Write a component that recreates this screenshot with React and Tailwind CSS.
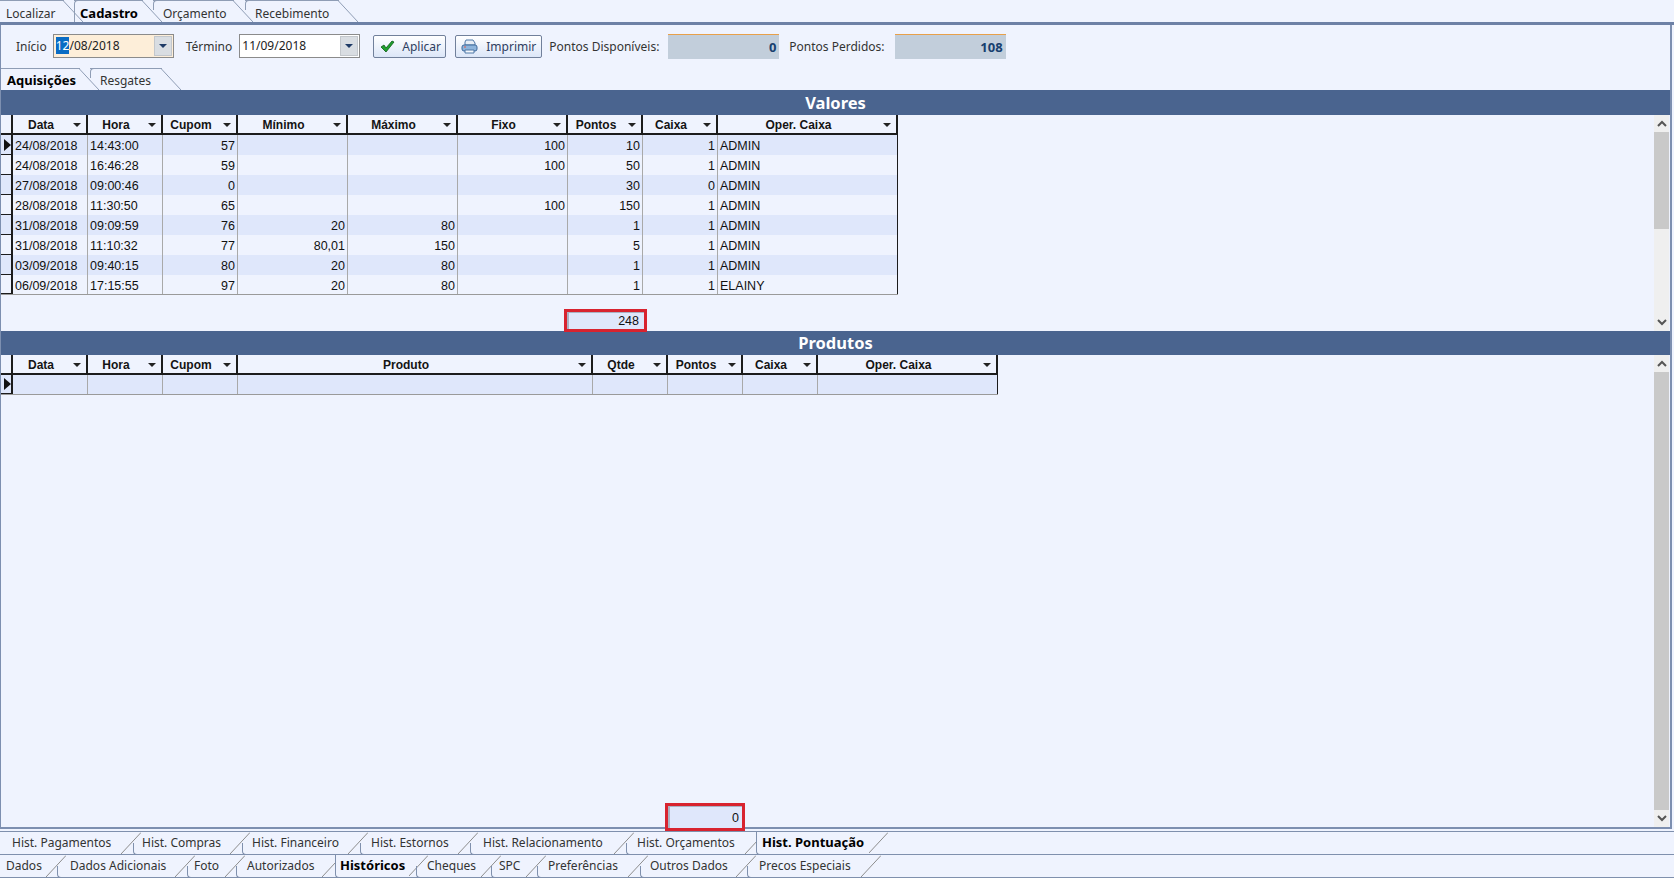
const UI_FONT = "font-['Noto_Sans',sans-serif]"
const GRID_FONT = "font-['Liberation_Sans',Arial,sans-serif]"

const VALORES_COLS = [
  { label: 'Data', cls: 'w-[75px]' },
  { label: 'Hora', cls: 'w-[75px]' },
  { label: 'Cupom', cls: 'w-[75px]', right: true },
  { label: 'Mínimo', cls: 'w-[110px]', right: true },
  { label: 'Máximo', cls: 'w-[110px]', right: true },
  { label: 'Fixo', cls: 'w-[110px]', right: true },
  { label: 'Pontos', cls: 'w-[75px]', right: true },
  { label: 'Caixa', cls: 'w-[75px]', right: true },
  { label: 'Oper. Caixa', cls: 'w-[180px]' },
]

const VALORES_ROWS = [
  ['24/08/2018', '14:43:00', '57', '', '', '100', '10', '1', 'ADMIN'],
  ['24/08/2018', '16:46:28', '59', '', '', '100', '50', '1', 'ADMIN'],
  ['27/08/2018', '09:00:46', '0', '', '', '', '30', '0', 'ADMIN'],
  ['28/08/2018', '11:30:50', '65', '', '', '100', '150', '1', 'ADMIN'],
  ['31/08/2018', '09:09:59', '76', '20', '80', '', '1', '1', 'ADMIN'],
  ['31/08/2018', '11:10:32', '77', '80,01', '150', '', '5', '1', 'ADMIN'],
  ['03/09/2018', '09:40:15', '80', '20', '80', '', '1', '1', 'ADMIN'],
  ['06/09/2018', '17:15:55', '97', '20', '80', '', '1', '1', 'ELAINY'],
]

const PRODUTOS_COLS = [
  { label: 'Data', cls: 'w-[75px]' },
  { label: 'Hora', cls: 'w-[75px]' },
  { label: 'Cupom', cls: 'w-[75px]' },
  { label: 'Produto', cls: 'w-[355px]' },
  { label: 'Qtde', cls: 'w-[75px]' },
  { label: 'Pontos', cls: 'w-[75px]' },
  { label: 'Caixa', cls: 'w-[75px]' },
  { label: 'Oper. Caixa', cls: 'w-[180px]' },
]

const TOP_TABS = [
  { label: 'Localizar', cls: 'w-[64px] pl-[6px]', first: true },
  { label: 'Cadastro', cls: 'w-[69px] pl-[6px] -ml-[9px]', active: true },
  { label: 'Orçamento', cls: 'w-[81px] pl-[10px] -ml-[9px]' },
  { label: 'Recebimento', cls: 'w-[94px] pl-[10px] -ml-[8px]' },
]

const INNER_TABS = [
  { label: 'Aquisições', cls: 'w-[79px] pl-[6px]', active: true, first: true },
  { label: 'Resgates', cls: 'w-[72px] pl-[10px] -ml-[9px]' },
]

const HIST_TABS = [
  { label: 'Hist. Pagamentos', cls: 'w-[122px] pl-[12px]', first: true },
  { label: 'Hist. Compras', cls: 'w-[98px] pl-[9px] -ml-[8px]' },
  { label: 'Hist. Financeiro', cls: 'w-[107px] pl-[10px] -ml-[8px]' },
  { label: 'Hist. Estornos', cls: 'w-[99px] pl-[11px] -ml-[8px]' },
  { label: 'Hist. Relacionamento', cls: 'w-[145px] pl-[13px] -ml-[8px]' },
  { label: 'Hist. Orçamentos', cls: 'w-[120px] pl-[11px] -ml-[8px]' },
  { label: 'Hist. Pontuação', cls: 'w-[113px] pl-[6px] -ml-[9px]', active: true },
]

const MAIN_TABS = [
  { label: 'Dados', cls: 'w-[47px] pl-[6px]', first: true },
  { label: 'Dados Adicionais', cls: 'w-[119px] pl-[13px] -ml-[9px]' },
  { label: 'Foto', cls: 'w-[39px] pl-[7px] -ml-[8px]' },
  { label: 'Autorizados', cls: 'w-[87px] pl-[11px] -ml-[9px]' },
  { label: 'Históricos', cls: 'w-[74px] pl-[5px] -ml-[7px]', active: true },
  { label: 'Cheques', cls: 'w-[66px] pl-[11px] -ml-[12px]' },
  { label: 'SPC', cls: 'w-[36px] pl-[8px] -ml-[10px]' },
  { label: 'Preferências', cls: 'w-[92px] pl-[11px] -ml-[9px]' },
  { label: 'Outros Dados', cls: 'w-[97px] pl-[10px] -ml-[8px]' },
  { label: 'Precos Especiais', cls: 'w-[115px] pl-[12px] -ml-[9px]' },
]

// aba de cima: a inclinacao desce para a direita
function TopTab({ tab, padTop = 'pt-[3px]' }) {
  return (
    <>
      <div className={`relative h-full shrink-0 border-t border-[#8f9db5] leading-[17px] ${padTop} ${tab.cls} ${tab.active ? 'text-[13px] font-bold text-black' : 'text-[12px] text-[#333]'}`}>
        {!tab.first && (
          <span className={`absolute -top-px left-0 w-[5px] rounded-tl-[4px] border-l border-t border-[#8f9db5] ${tab.active ? 'bottom-0' : 'h-[10px]'}`} />
        )}
        {tab.label}
      </div>
      <svg width="20" height="22" className="-ml-px shrink-0">
        <path d="M0 .5 20 22" stroke="#8f9db5" fill="none" />
      </svg>
    </>
  )
}

// aba de baixo: a inclinacao sobe para a direita
function BottomTab({ tab }) {
  return (
    <>
      <div className={`relative h-full shrink-0 pt-[2px] leading-[17px] ${tab.cls} ${tab.active ? 'z-10 bg-[#eff3fe] text-[13px] font-bold text-black' : 'text-[12px] text-[#333]'}`}>
        {!tab.first && (
          <span className={`absolute -bottom-px left-0 w-[5px] rounded-bl-[4px] border-b border-l border-[#7f90ad] ${tab.active ? 'top-0' : 'h-[12px]'}`} />
        )}
        {tab.label}
      </div>
      <svg width="20" height="22" className="-ml-px shrink-0 self-end">
        <path d="M0 22 20 .5" stroke="#8d8d8d" fill="none" />
      </svg>
    </>
  )
}

function HeaderCell({ col }) {
  return (
    <div className={`flex h-full shrink-0 items-center border-r-2 border-[#1c1c1c] ${col.cls}`}>
      <span className="mt-[2px] flex-1 pr-[4px] text-center text-[12px] font-bold text-[#141414]">{col.label}</span>
      <svg width="8" height="4" className="mr-[5px] mt-[1px] shrink-0">
        <path d="M0 0h8L4 4z" fill="#222" />
      </svg>
    </div>
  )
}

function Indicator({ current }) {
  return (
    <div className="flex h-full w-[12px] shrink-0 items-center border-r-2 border-b border-[#1c1c1c]">
      {current && (
        <svg width="7" height="12" className="ml-[3px]">
          <path d="M0 0l7 6-7 6z" fill="#111" />
        </svg>
      )}
    </div>
  )
}

function DataGrid({ cols, rows, width }) {
  return (
    <div className={`${width} ${GRID_FONT}`}>
      <div className="flex h-[20px] border-b-2 border-[#1c1c1c]">
        <div className="h-full w-[12px] shrink-0 border-r-2 border-[#1c1c1c]" />
        {cols.map((c) => <HeaderCell key={c.label} col={c} />)}
      </div>
      <div className="border-b border-[#9a9a9a]">
        {rows.map((row, i) => (
          <div key={i} className={`flex h-[20px] last:h-[19px] ${i % 2 === 0 ? 'bg-[#dfe7fb]' : 'bg-[#eff3fe]'}`}>
            <Indicator current={i === 0} />
            {cols.map((c, j) => (
              <div
                key={c.label}
                className={`h-full shrink-0 truncate border-r px-[2px] text-[12.5px] leading-[22px] text-[#111] ${c.cls} ${c.right ? 'text-right' : ''} ${j === cols.length - 1 ? 'border-[#1c1c1c]' : 'border-[#a9a9a9]'}`}
              >
                {row[j]}
              </div>
            ))}
          </div>
        ))}
      </div>
    </div>
  )
}

function Chevron({ down }) {
  return (
    <svg width="10" height="7" viewBox="0 0 10 7">
      <path d={down ? 'M1 1l4 4 4-4' : 'M1 6l4-4 4 4'} stroke="#555" strokeWidth="2" fill="none" />
    </svg>
  )
}

function Scrollbar({ thumb }) {
  return (
    <div className="flex h-full w-[15px] shrink-0 flex-col bg-[#efefef]">
      <div className="flex h-[17px] shrink-0 items-center justify-center"><Chevron /></div>
      <div className={`bg-[#c9c9c9] ${thumb}`} />
      <div className="mt-auto flex h-[17px] shrink-0 items-center justify-center"><Chevron down /></div>
    </div>
  )
}

function TotalBox({ value, className, inner }) {
  return (
    <div className={`relative z-10 border-[3px] border-[#d8232f] bg-[#eff3fe] ${className}`}>
      <div className={`h-full border-l-2 border-t border-[#a9b2c4] bg-[#dfe7fb] text-right text-[12.5px] text-[#111] ${GRID_FONT} ${inner}`}>{value}</div>
    </div>
  )
}

function SectionBar({ title, className }) {
  return (
    <div className={`shrink-0 bg-[#4a648f] text-center text-[16.5px] font-bold text-white ${UI_FONT} ${className}`}>{title}</div>
  )
}

function DateInput({ value, focused, className }) {
  return (
    <div className={`flex h-[24px] w-[121px] items-center border border-[#8b8b8b] pl-[2px] text-[12px] text-[#222] ${focused ? 'bg-[#fdeed9]' : 'bg-white'} ${className}`}>
      <span className="flex-1 pb-[1px]">
        {focused ? <><span className="bg-[#0a6cc4] text-white">12</span>/08/2018</> : value}
      </span>
      <div className="mr-[1px] flex h-[20px] w-[18px] items-center justify-center border border-[#c3c7cc] bg-[#d9dde2]">
        <svg width="8" height="4"><path d="M0 0h8L4 4z" fill="#1e3a66" /></svg>
      </div>
    </div>
  )
}

function ToolButton({ icon, label, className }) {
  return (
    <button className={`flex h-[23px] items-center rounded-[2px] border border-[#71809b] bg-gradient-to-b from-white to-[#dce6f8] text-[12px] text-[#2f4060] ${className}`}>
      {icon}
      {label}
    </button>
  )
}

function PointsBox({ value, className }) {
  return (
    <div className={`h-[25px] w-[111px] border-t border-[#e8a04a] bg-[#c2cedb] pr-[3px] text-right text-[13px] font-bold leading-[24px] text-[#17406f] ${className}`}>{value}</div>
  )
}

export default function App() {
  return (
    <div className={`flex h-[878px] w-[1674px] flex-col overflow-hidden bg-[#eff3fe] ${UI_FONT}`}>
      <div className="flex h-[22px] shrink-0">
        {TOP_TABS.map((t) => <TopTab key={t.label} tab={t} padTop="pt-[4px]" />)}
      </div>
      <div className="h-[3px] shrink-0 bg-[#6d81a6]" />

      <div className="mr-[2px] flex min-h-0 flex-1 flex-col border-r-2 border-b-2 border-l border-[#7d8fb0]">
        <div className="flex h-[43px] shrink-0 items-start pt-[9px] text-[12px] text-[#333]">
          <span className="ml-[15px] mt-[4px]">Início</span>
          <DateInput focused className="ml-[6px]" />
          <span className="ml-[12px] mt-[4px]">Término</span>
          <DateInput value="11/09/2018" className="ml-[7px]" />
          <ToolButton
            className="ml-[13px] mt-px w-[73px] pl-[6px]"
            label="Aplicar"
            icon={
              <svg width="15" height="13" viewBox="0 0 15 13" className="mr-[7px]">
                <path d="M1 7l3-2 2 3 6-7 2 1-8 10z" fill="#1ea02c" stroke="#0f5a18" strokeWidth=".8" />
              </svg>
            }
          />
          <ToolButton
            className="ml-[9px] mt-px w-[87px] pl-[5px]"
            label="Imprimir"
            icon={
              <svg width="17" height="15" viewBox="0 0 17 15" className="mr-[8px]">
                <path d="M5 1h7l2 3v2H4V3z" fill="#e6edf6" stroke="#4f78a8" />
                <rect x="1" y="6" width="15" height="6" rx="2" fill="#8db4dc" stroke="#3f6a9c" />
                <path d="M4 11h9v3H4z" fill="#f4f7fb" stroke="#4f78a8" />
                <path d="M3 8h2" stroke="#e25b4a" />
              </svg>
            }
          />
          <span className="ml-[7px] mt-[4px]">Pontos Disponíveis:</span>
          <PointsBox value="0" className="ml-[9px]" />
          <span className="ml-[10px] mt-[4px]">Pontos Perdidos:</span>
          <PointsBox value="108" className="ml-[10px]" />
        </div>

        <div className="flex h-[22px] shrink-0">
          {INNER_TABS.map((t) => <TopTab key={t.label} tab={t} />)}
        </div>

        <div className="flex h-[241px] shrink-0 flex-col">
          <SectionBar title="Valores" className="h-[25px] leading-[25px]" />
          <div className="flex min-h-0 flex-1">
            <div className="min-w-0 flex-1">
              <DataGrid cols={VALORES_COLS} rows={VALORES_ROWS} width="w-[897px]" />
              <TotalBox value="248" className="ml-[563px] mt-[14px] h-[23px] w-[83px]" inner="pr-[5px] leading-[17px]" />
            </div>
            <Scrollbar thumb="h-[97px]" />
            <div className="w-px shrink-0" />
          </div>
        </div>

        <div className="flex min-h-0 flex-1 flex-col">
          <SectionBar title="Produtos" className="h-[24px] leading-[24px]" />
          <div className="flex min-h-0 flex-1">
            <div className="flex min-w-0 flex-1 flex-col">
              <DataGrid cols={PRODUTOS_COLS} rows={[['', '', '', '', '', '', '', '']]} width="w-[997px]" />
              <TotalBox value="0" className="-mb-[4px] ml-[664px] mt-auto h-[28px] w-[80px]" inner="pr-[3px] leading-[22px]" />
            </div>
            <Scrollbar thumb="h-[439px]" />
            <div className="w-px shrink-0" />
          </div>
        </div>
      </div>

      <div className="mt-[2px] flex h-[24px] shrink-0 border-t border-b border-[#7f90ad]">
        {HIST_TABS.map((t) => <BottomTab key={t.label} tab={t} />)}
      </div>
      <div className="flex h-[23px] shrink-0 border-b border-[#7f90ad]">
        {MAIN_TABS.map((t) => <BottomTab key={t.label} tab={t} />)}
      </div>
    </div>
  )
}
